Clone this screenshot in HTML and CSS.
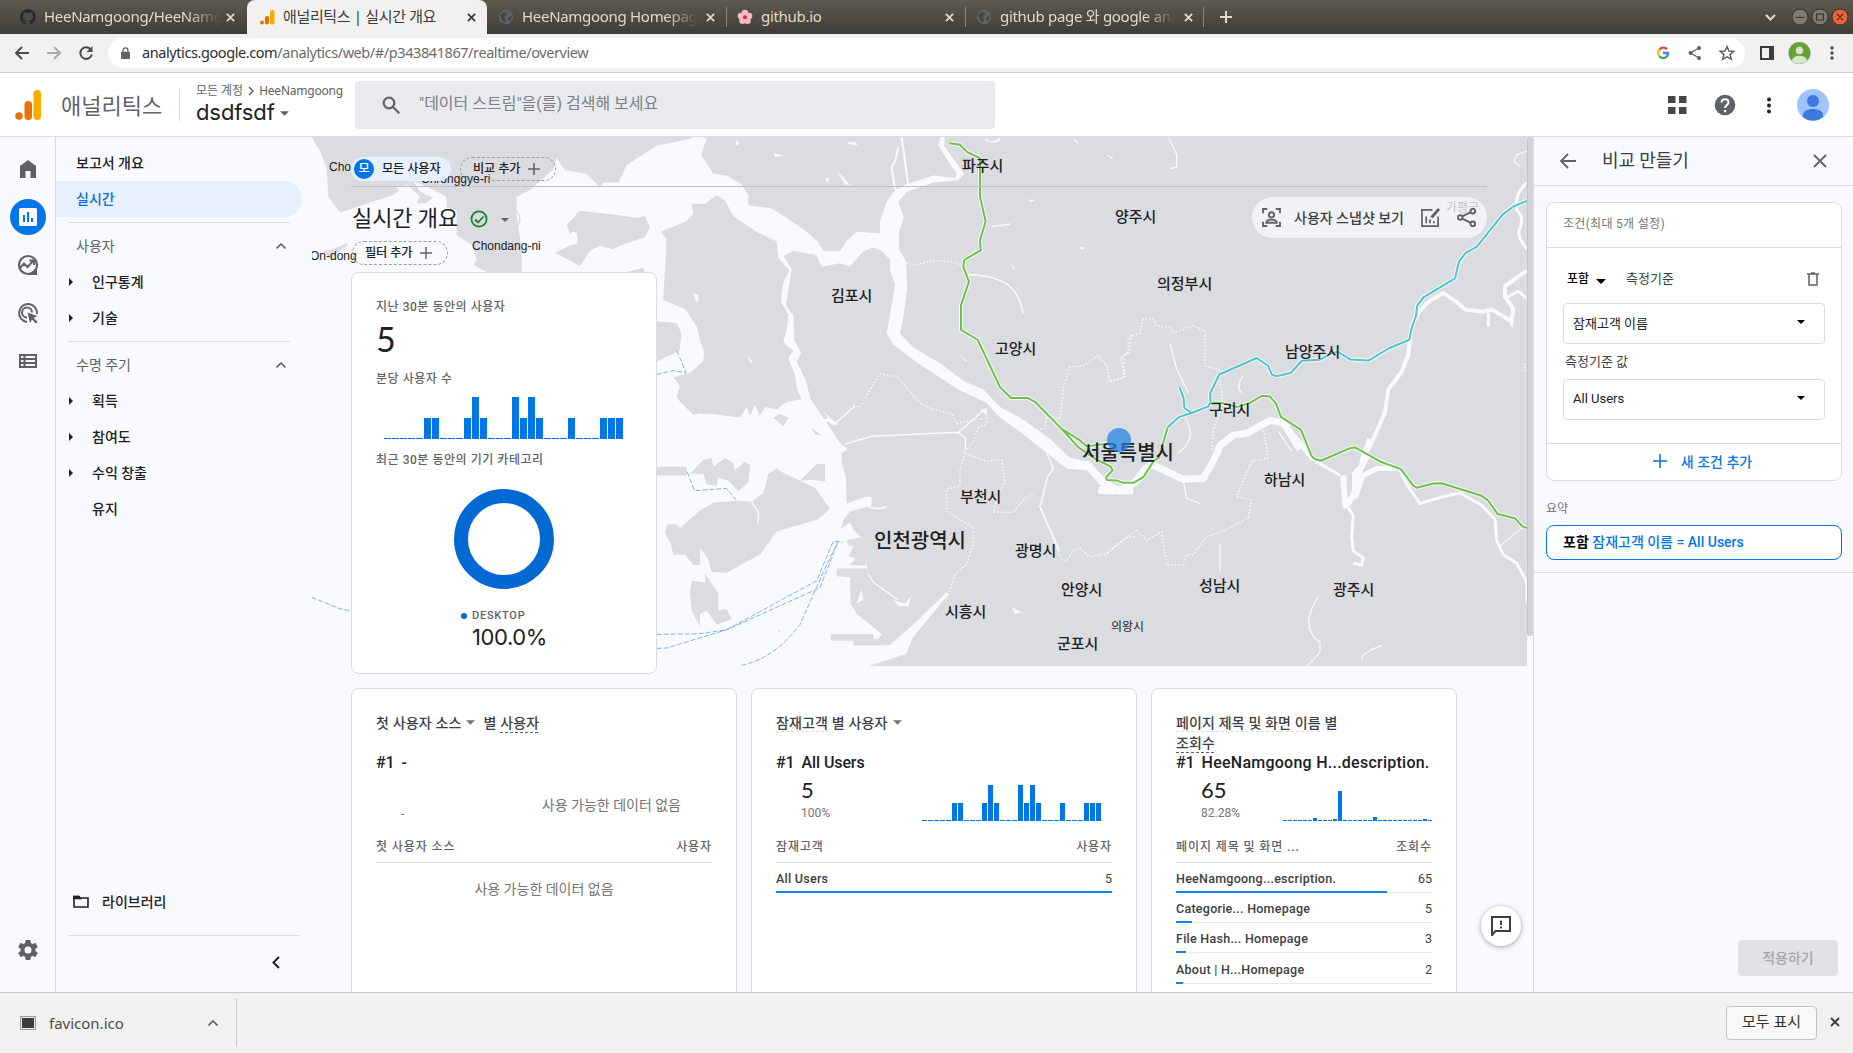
FILE: index.html
```html
<!DOCTYPE html>
<html lang="ko">
<head>
<meta charset="utf-8">
<title>애널리틱스 | 실시간 개요</title>
<link rel="stylesheet" href="styles.css">
</head>
<body>
<div class="window">
  <div class="tabs">
    <div class="tab tab-first"><svg class="fav" viewBox="0 0 16 16"><path fill="#24292f" d="M8 0a8 8 0 0 0-2.5 15.600c.4.1.5-.2.5-.4v-1.500c-2.200.5-2.700-1-2.700-1-.4-.9-.9-1.200-.9-1.200-.7-.5.1-.5.1-.5.8.1 1.200.8 1.200.8.7 1.200 1.900.9 2.300.7.1-.5.3-.9.5-1.100-1.800-.2-3.600-.9-3.600-4 0-.9.3-1.600.8-2.100-.1-.2-.4-1 .1-2.100 0 0 .7-.2 2.200.8a7.600 7.600 0 0 1 4 0c1.500-1 2.200-.8 2.200-.8.4 1.100.2 1.900.1 2.100.5.6.8 1.300.8 2.100 0 3.100-1.900 3.700-3.700 3.900.3.3.6.8.6 1.500v2.200c0 .2.1.5.6.4A8 8 0 0 0 8 0z"/></svg><span class="tab-title fade">HeeNamgoong/HeeNamgoong</span><svg class="x" viewBox="0 0 10 10"><path d="M1 1l8 8M9 1l-8 8"/></svg></div>
    <div class="tab active"><svg class="fav" viewBox="0 0 16 16"><circle cx="3" cy="13.500" r="2" fill="#e8710a"/><rect x="6" y="7" width="4" height="8.500" rx="1.800" fill="#e8710a"/><rect x="11" y="1" width="4.500" height="14.500" rx="2" fill="#f9ab00"/></svg><span class="tab-title">애널리틱스 | 실시간 개요</span><svg class="x" viewBox="0 0 10 10"><path d="M1 1l8 8M9 1l-8 8"/></svg></div>
    <div class="tab"><svg class="fav" viewBox="0 0 16 16"><circle cx="8" cy="8" r="7.200" fill="#5f6368"/><path fill="#46443e" d="M2 6l4-3 3 1-1 3-2 1 2 2-1 4-3-3zM10 8l4-1-1 4-3 1z"/></svg><span class="tab-title fade">HeeNamgoong Homepage</span><svg class="x" viewBox="0 0 10 10"><path d="M1 1l8 8M9 1l-8 8"/></svg></div>
    <div class="tab sep"><svg class="fav" viewBox="0 0 16 16"><g fill="#f8b8c4"><circle cx="8" cy="4" r="3.300"/><circle cx="12" cy="7" r="3.300"/><circle cx="10.500" cy="11.700" r="3.300"/><circle cx="5.500" cy="11.700" r="3.300"/><circle cx="4" cy="7" r="3.300"/></g><circle cx="8" cy="8.300" r="2" fill="#c8334a"/></svg><span class="tab-title">github.io</span><svg class="x" viewBox="0 0 10 10"><path d="M1 1l8 8M9 1l-8 8"/></svg></div>
    <div class="tab sep last"><svg class="fav" viewBox="0 0 16 16"><circle cx="8" cy="8" r="7.200" fill="#5f6368"/><path fill="#46443e" d="M2 6l4-3 3 1-1 3-2 1 2 2-1 4-3-3zM10 8l4-1-1 4-3 1z"/></svg><span class="tab-title fade">github page 와 google analytics</span><svg class="x" viewBox="0 0 10 10"><path d="M1 1l8 8M9 1l-8 8"/></svg></div>
    <svg class="plus" viewBox="0 0 12 12"><path d="M6 0v12M0 6h12"/></svg>
    <svg class="win" viewBox="0 0 90 20"><path d="M1 8l4.500 4.500L10 8" fill="none" stroke="#dfdbd2" stroke-width="2"/><g stroke="#35332f"><circle cx="35" cy="10" r="8" fill="#7d7a73"/><circle cx="55" cy="10" r="8" fill="#7d7a73"/><circle cx="75" cy="10" r="8" fill="#ef6034"/></g><path d="M31 10.500h8M51.500 7h7v6h-7zM72 7l6 6M78 7l-6 6" fill="none" stroke="#35332f" stroke-width="1.200"/></svg>
  </div>

  <div class="toolbar">
    <svg class="tb-nav" viewBox="0 0 90 20"><path d="M15 10H2M8 4l-6 6 6 6" class="dk"/><path d="M33 10h13M40 4l6 6-6 6" class="lt"/><path d="M76.500 6.200a5.800 5.800 0 1 0 1.300 5.200" class="dk"/><path d="M78.500 3v6h-6z" fill="#4c4c4c"/></svg>
    <div class="omni">
      <svg class="lock" viewBox="0 0 10 14"><rect y="5" width="10" height="8" rx="1" fill="#5f6368"/><path d="M2.300 6V3.500a2.700 2.700 0 0 1 5.400 0V6" fill="none" stroke="#5f6368" stroke-width="1.400"/></svg>
      <span class="url"><b>analytics.google.com</b>/analytics/web/#/p343841867/realtime/overview</span>
      <svg class="omni-icons" viewBox="0 0 84 18"><g fill="none" stroke-width="2.300"><path d="M6.500 5.500A5 5 0 0 1 14 5.300" stroke="#ea4335"/><path d="M6.700 5.300a5 5 0 0 0 0 7.200" stroke="#fbbc05"/><path d="M6.500 12.300a5 5 0 0 0 7 .5" stroke="#34a853"/><path d="M10 9h5a5 5 0 0 1-1.700 4" stroke="#4285f4"/></g><g fill="#5f6368"><circle cx="46" cy="4" r="2"/><circle cx="37.500" cy="9" r="2"/><circle cx="46" cy="14" r="2"/></g><path d="M46 4l-8.500 5 8.500 5" fill="none" stroke="#5f6368" stroke-width="1.400"/><path d="M74 2.500l2 4.500 4.800.4-3.700 3.200 1.200 4.700-4.300-2.500-4.300 2.500 1.200-4.700-3.700-3.200 4.800-.4z" fill="none" stroke="#5f6368" stroke-width="1.500"/></svg>
    </div>
    <svg class="tb-right" viewBox="0 0 88 24"><path d="M1 6h12v12H1z" fill="none" stroke="#3c3c3c" stroke-width="2"/><path d="M9 6h4v12H9z" fill="#3c3c3c"/><circle cx="39.500" cy="12" r="11" fill="#689f38"/><circle cx="39.500" cy="9.500" r="3.700" fill="#d7e5c8"/><path d="M32 20c0-7 15-7 15 0a11 11 0 0 1-15 0z" fill="#d7e5c8"/><g fill="#4c4c4c"><circle cx="72" cy="7" r="1.700"/><circle cx="72" cy="12" r="1.700"/><circle cx="72" cy="17" r="1.700"/></g></svg>
  </div>

  <header class="ga">
    <svg class="logo" viewBox="0 0 26 30"><circle cx="4" cy="26" r="3.800" fill="#e8710a"/><rect x="9.500" y="11" width="7.500" height="19" rx="3.700" fill="#e8710a"/><rect x="18.500" width="7.500" height="30" rx="3.700" fill="#f9ab00"/></svg>
    <span class="brand">애널리틱스</span>
    <div class="account"><div class="crumb">모든 계정 <svg viewBox="0 0 6 10"><path d="M1 1l4 4-4 4"/></svg> <i>HeeNamgoong</i></div><div class="prop">dsdfsdf<svg viewBox="0 0 10 5"><path d="M0 0h10L5 5z"/></svg></div></div>
    <div class="search"><svg viewBox="0 0 18 18"><circle cx="7" cy="7" r="5.300"/><path d="M11 11l6.300 6.300"/></svg><span>"데이터 스트림"을(를) 검색해 보세요</span></div>
    <svg class="ga-right" viewBox="0 0 164 34"><path d="M0 8h7.500v7H0zM11 8h7.500v7H11zM0 19h7.500v7H0zM11 19h7.500v7H11z" fill="#444746"/><circle cx="57" cy="17" r="10.300" fill="#5f6368"/><path d="M53.500 14.500c0-4.500 7-4.500 7 0 0 2.500-3.400 2.700-3.400 5.500" fill="none" stroke="#fff" stroke-width="2"/><path d="M56 22h2.200v2.200H56z" fill="#fff"/><g fill="#202124"><circle cx="101" cy="11.500" r="2"/><circle cx="101" cy="17.500" r="2"/><circle cx="101" cy="23.500" r="2"/></g><circle cx="145" cy="17" r="16" fill="#a0c3ff"/><circle cx="145" cy="13" r="6" fill="#3b78e0"/><path d="M135 29v-2c0-8 20-8 20 0v2a16 16 0 0 1-20 0z" fill="#3b78e0"/></svg>
  </header>

  <div class="body">
    <nav class="rail">
      <svg viewBox="0 0 36 36"><path d="M10 27V15l8-6 8 6v12h-5.500v-7h-5v7z"/></svg>
      <svg viewBox="0 0 36 36"><circle cx="18" cy="18" r="18" fill="#0276e8"/><rect x="9" y="9" width="18" height="18" rx="1.500" fill="#fff"/><path fill="#0276e8" d="M13 16h2v7h-2zM17 13h2v10h-2zM21 19h2v4h-2z"/></svg>
      <svg viewBox="0 0 36 36"><path d="M27 18v10h-9" fill="#5f6368"/><circle cx="18" cy="18" r="9" fill="#f8fafd" stroke="#5f6368" stroke-width="2.200"/><path class="ln" d="M10 21l4-4.500 3.500 3.500 5.500-6M19.500 13.500H24V18"/></svg>
      <svg viewBox="0 0 36 36"><path class="ln" d="M17 27a9 9 0 1 1 10-8M17 22.500a5 5 0 1 1 5-5"/><path d="M17.500 17.500l10 3.500-3.800 2 4 4-1.700 1.500-4-4-2 3.500z"/></svg>
      <svg viewBox="0 0 36 36"><path class="ln" d="M10 12h16v12H10zM10 16h16M10 20h16M14.500 12v12"/></svg>
      <svg class="gear" viewBox="0 0 24 24"><path fill-rule="evenodd" d="M19.430 12.980c.04-.32.070-.64.070-.98s-.03-.66-.07-.98l2.110-1.650c.19-.15.24-.42.12-.64l-2-3.460c-.12-.22-.39-.3-.61-.22l-2.490 1c-.52-.4-1.080-.73-1.690-.98l-.38-2.650A.49.49 0 0 0 14 2h-4c-.25 0-.46.18-.49.42l-.38 2.650c-.61.25-1.170.59-1.690.98l-2.490-1c-.23-.09-.49 0-.61.22l-2 3.460c-.13.22-.07.49.12.64l2.110 1.650c-.04.32-.07.65-.07.98s.03.66.07.98l-2.110 1.650c-.19.15-.24.42-.12.64l2 3.460c.12.22.39.3.61.22l2.490-1c.52.4 1.080.73 1.690.98l.38 2.650c.03.24.24.42.49.42h4c.25 0 .46-.18.49-.42l.38-2.650c.61-.25 1.170-.59 1.690-.98l2.490 1c.23.09.49 0 .61-.22l2-3.460c.12-.22.07-.49-.12-.64zM12 15.500a3.500 3.500 0 1 1 0-7 3.500 3.500 0 0 1 0 7z"/></svg>
    </nav>
    <nav class="menu">
      <a class="item">보고서 개요</a>
      <a class="item on">실시간</a>
      <div class="group">사용자<svg viewBox="0 0 10 6"><path d="M.5 5.500L5 1l4.500 4.500"/></svg></div>
      <a class="sub tri">인구통계</a>
      <a class="sub tri">기술</a>
      <div class="group">수명 주기<svg viewBox="0 0 10 6"><path d="M.5 5.500L5 1l4.500 4.500"/></svg></div>
      <a class="sub tri">획득</a>
      <a class="sub tri">참여도</a>
      <a class="sub tri">수익 창출</a>
      <a class="sub">유지</a>
      <div class="library"><svg viewBox="0 0 16 13"><path d="M1 11.500V1.500h4.500L7 3h8v9H1z"/><path d="M1 1.500h5l1.500 2H1z" fill="#202124"/></svg>라이브러리</div>
      <div class="collapse"><svg viewBox="0 0 8 13"><path d="M7 1L1.500 6.500 7 12"/></svg></div>
    </nav>

    <main class="content">
      <svg class="map" viewBox="312 137 1215 528.500">
        <defs>
          <path id="line-green" d="M748 38L780 42 802 63 840 80 840 190 857 260 840 315 842 343 793 370 790 390 807 432 783 500 783 570 833 598 900 733 933 764 983 764 1005 775 1085 852 1140 885 1160 902 1230 893M1085 852L1135 905 1185 937 1232 960 1238 970 1218 990 1221 998 1250 999 1270 1006 1300 1006 1330 990 1345 968 1360 945 1380 932M1387 900L1403 848M1530 777L1565 778 1610 790 1650 778 1685 758 1710 760 1728 780 1743 818 1803 855 1835 930 1845 938 1863 943 1950 907 1965 905 2040 945 2103 967 2138 1012 2150 1020 2200 1008 2225 1007 2345 1043 2365 1057 2393 1095 2445 1107 2467 1130 2481 1135"/>
          <path id="line-teal" d="M202 848L237 818 275 807 325 788 332 775 330 752 358 697 470 650 505 673 515 697 530 702 573 692 605 658 660 655 700 635 715 633 750 654 807 657 865 623 928 598 935 565 948 530 952 500 970 477 1065 423 1077 375 1097 350 1130 333 1207 242 1240 218 1281 202M238 732L251 765 253 792 275 807"/>
        </defs>
        <rect x="312" y="137" width="1215" height="529" fill="#f8fafd"/>
        <rect x="690" y="137" width="837" height="529" fill="#dbdce0"/>
        <g transform="translate(700 130) scale(.33333 .35074)">
          <path class="water" d="M-30 17L5 17 20 25 3 70 40 125 80 130 125 155 145 185 145 215 210 222 260 250 320 290 355 320 370 345 420 345 440 315 470 290 540 295 540 260 560 205 585 172 620 155 700 130 765 137 770 125 715 45 722 17 735 17 732 45 792 125 775 143 700 150 620 176 595 205 612 250 597 290 597 340 618 375 622 450 608 545 600 580 640 620 720 665 790 715 850 740 900 790 960 820 1050 880 1110 935 1170 945 1220 1000 1260 1018 1300 1012 1300 1038 1255 1040 1200 1012 1160 970 1100 965 1040 920 960 860 900 820 860 778 770 737 650 662 580 612 560 580 575 500 585 440 570 400 570 370 545 345 520 335 490 345 450 390 420 380 365 390 350 360 340 355 280 345 250 360 275 395 270 430 258 500 280 530 283 600 303 635 290 660 320 720 330 765 405 870 420 892 443 910 425 920 425 950 438 990 440 1065 500 1045 515 1047 515 1070 450 1088 430 1112 425 1135 450 1120 462 1142 485 1162 440 1168 445 1185 462 1185 445 1215 467 1222 450 1240 500 1242 497 1215 505 1270 500 1250 410 1250 410 1272 450 1275 452 1350 470 1380 545 1437 535 1452 520 1450 520 1470 570 1468 640 1410 740 1318 745 1325 640 1445 620 1490 600 1527 605 1540 -60 1540z"/>
          <path class="land" d="M510 1527L625 1492 1300 1480 1300 1540 510 1540zM393 1437h127v33h-60v-14h-67z"/>
          <path class="land" d="M-1165 20L-1140 60-1120 110-1115 190-1080 235-990 207-920 185-880 155-840 190-850 210-820 208-800 190-760 195-760 220-730 230-730 300-680 330-670 370-680 385-640 405-535 405-535 340-550 240-550 190-505 168-440 112-430 80-405 115-340 125-300 165-290 150-245 150-220 100-130 45-30 25-15 15z"/>
          <path class="water" d="M-915 160l20 0 45 48-15 0zM-860 145l60 25 40 20-15 15-65-30z"/>
          <path class="land" d="M-435 350L-380 325-400 270-360 230-265 240-190 250-165 245-150 275-165 305-240 330-260 340-300 330-330 345-360 388zM-220 405l50-12 5 15zM-1130 345l30-5 40-18 2 8-30 20-20 20z"/>
          <path class="water" d="M-395 310l10-20 15 3 3 30-20 5z"/>
          <path class="land" d="M15 210L50 185 75 200 100 245 170 290 230 318 235 365 268 400 248 440 243 490 265 525 262 560 250 605 280 630 265 650 285 700 290 735 305 768 260 775 230 797 195 790 180 815 165 785 150 815 140 790 120 820 50 812 0 808-20 812-60 775-70 760-60 730-80 705-30 692 10 660 12 630 0 600-10 560-45 510-110 485-100 310-118 290-45 262-20 240-25 210z"/>
          <path class="water" d="M-20 465l15 5 0 20-10-5zM110 25l8 15-12 5zM220 65l30 8-25 5zM140 640l18 20-5 8z"/>
          <path class="land" d="M-130 545L-70 550-55 580-62 630-130 660zM-130 960l90 0 0 25-90 0zM0 1085L40 1063 110 1057 155 1060 190 1035 205 980 230 965 245 975 300 1000 345 1020 390 1080 355 1110 230 1145 180 1210 80 1262 35 1260 25 1225 0 1190 0 1240-20 1240-45 1210-80 1210-88 1180-105 1150-98 1125-70 1125-60 1135zM300 1000l50-48 25 0 0 50-40-5zM10 940l25-5 5 25 35-25 25 15 5 20 30-25 15 10-5 50-30 25-30-30-30-10-5 25-30-5-10-30-40 0zM220 820l20-10 25 10-15 25zM335 850l30 20-20-2zM-25 1285L15 1290 15 1265 40 1300 55 1320 55 1370 80 1365 95 1395 50 1410 20 1370 0 1380 0 1415-25 1370-30 1320zM235 1425l8 0-6 8z"/>
          <g class="water"><path d="M410 115l40 42-15-2zM375 135l12 5-5 12zM442 35l25 0 5 10-25-5zM855 20q20 25 45 0l0 10q-20 15-45-2zM1120 20l15 18-8-2zM1215 70l25 8-5 5zM982 198l25 2-15 5zM1140 333l18 3-15 6zM1090 248l15 8zM935 378l10 18-5 2zM780 640l22 20-10-3zM485 1310l5 30-20 10zM580 1340l35 10 20-22-10 30-30 0zM935 1360l30 15-20 5zM760 1370l15 22-10-2zM840 798l20-5 0 20zM365 800l50 40-15 3-15-12-15 10 0-15 15-5z"/></g>
        </g>
        <g class="thin" transform="translate(700 130) scale(.33333 .35074)">
          <path stroke-width="2" d="M605 20L625 160M595 50L585 90 575 105 582 150 587 170"/>
          <path stroke-width="1.500" d="M435 895L515 873 775 862 855 797M775 862L797 880 795 910M875 275L930 268M500 1070q25 15 60 5M505 1265l15 25 75 50M1040 920l20 45-18 25-20 80M1018 1070l60 130M155 1060l20 30 0 35M805 412q100 5 130 40 18 12 35 70M405 837l60-50"/>
          <path class="dots" d="M618 380l30 5 50-12 60 2 25 12M460 785l20 5 30-50 30-45 50 8 75 80 40 15 50 10 15 30 40-10 40-5M860 800l0 35-25 15-15 40-30 30 70 25 45-5 10 60-20 40-15 50 60 0 30-35 30-20M795 920l-15 50 0 45-40 8 0 65 80 45 0 45-20 60-35 30-25 70M1000 858l35-8 5-35 40 10 10-90 20-60 40-2 45-30 25 30 10 45 45-15-5-60 20-10 5-50M1085 1225l15 5 20-30 20-8 30 25 50-10 60-45 30-5M1018 1070l65 150"/>
        </g>
        <g class="thin" transform="translate(1100 130) scale(.33333 .35074)">
          <path stroke-width="7" d="M-5 1025Q60 1040 110 1000 140 950 165 958L250 996 310 993Q345 940 360 900L400 870 440 865 510 828 550 835 600 910"/>
          <path stroke-width="5" d="M590 880L640 940"/><path stroke-width="3" d="M560 840L640 940 720 985"/>
          <path stroke-width="6" d="M730 985l5 85 30-30 0-60 20-20 20-40"/><path stroke-width="5" d="M765 1050L790 985 830 965 890 965M745 1070L775 1000 790 930 810 880"/>
          <path stroke-width="4" d="M800 920L830 860 855 805 865 740 905 690 925 640 935 560 955 520 985 490 1030 465 1070 490 1095 512 1150 518 1175 512 1235 545 1240 510 1215 475 1215 445 1281 400"/>
          <path stroke-width="3" d="M895 960L920 1010 960 1065 1030 1045 1080 1035 1145 1070 1185 1110 1190 1170 1210 1210 1250 1235 1281 1290V1350M1165 520l0 40M1235 540l0 20M1281 150q-40 30-30 80 25 20 5 60 0 20 25 50M740 1070l20 30-5 60 5 40 30 20-5 20-25-5M1215 480l40-20 25 20"/>
          <path stroke-width="1.200" d="M205 20l25 50 0 35-20 5M255 820q40 60-20 100M250 1000l10 50 40 15M360 1180v80M430 700q-25 30-5 50M535 860l40 55M655 1330q-60 90 5 130l0 30-40 40M785 1510q0-20 60-40M1195 1190l70-55M210 610l20 70 35 70M1281 60l-30 10-10 20 20 15"/>
          <path class="dots" d="M20 718l50-10 0-30-10-25 25-20 0-40 35-15 10-40 30 0 10 20 40 5 10 15 60-20 35 15 0 100 40 10 15 100-30 70-5 55 45-10M490 855l15 80-50 10-45 100 45 10-10 50-65 35-60 20-40 50-20 0-10 30-50 0-15-95-45 25-30-30-70 50-25 25M1275 665v25"/>
        </g>
        <g class="rail-green" transform="translate(700 130) scale(.33333 .35074)"><use href="#line-green" class="halo"/><use href="#line-green"/></g>
        <g class="rail-teal" transform="translate(1100 130) scale(.33333 .35074)"><use href="#line-teal" class="halo"/><use href="#line-teal"/></g>
        <g class="ferry" transform="translate(700 130) scale(.33333 .35074)"><path d="M-1165 1332L-1080 1365-1040 1373M-130 697L-80 686-42 692-70 628M-38 975L-17 1028 80 1022 108 1055M-130 1438L0 1436 80 1425 350 1285 400 1172 428 1176M-130 1478L-100 1477 80 1425 360 1305 415 1172 370 1260 300 1410Q220 1510 120 1527"/></g>
        <g class="names">
          <text x="962" y="171">파주시</text><text x="1115" y="222">양주시</text><text x="831" y="301">김포시</text><text x="1157" y="289">의정부시</text><text x="995" y="354">고양시</text><text x="1285" y="357">남양주시</text><text x="1209" y="415">구리시</text><text x="960" y="502">부천시</text><text x="1264" y="485">하남시</text><text x="1015" y="556">광명시</text><text x="1061" y="595">안양시</text><text x="1199" y="591">성남시</text><text x="1333" y="595">광주시</text><text x="945" y="617">시흥시</text><text x="1057" y="649">군포시</text>
          <text x="1082" y="460" class="big">서울특별시</text><text x="874" y="548" class="big">인천광역시</text><text x="1111" y="631" class="small">의왕시</text><text x="1446" y="212" class="small">가평군</text>
          <text x="329" y="171" class="en">Cho</text><text x="421" y="183" class="en">Chronggye-ri</text><text x="472" y="250" class="en">Chondang-ni</text><text x="310" y="260" class="en">On-dong</text>
        </g>
        <circle cx="1119" cy="440" r="12" fill="#1a80e6" fill-opacity=".7"/>
      </svg>
      <div class="scrollbar"></div>

      <div class="page">
        <div class="compare"><span class="all"><b>모</b>모든 사용자</span><span class="chip">비교 추가<svg viewBox="0 0 12 12"><path d="M6 0v12M0 6h12"/></svg></span></div>
        <div class="heading"><h1>실시간 개요</h1><svg class="check" viewBox="0 0 54 18"><circle cx="9" cy="9" r="7.600" fill="none" stroke="#188038" stroke-width="1.800"/><path d="M5 9.500l3 3 5.500-6" fill="none" stroke="#188038" stroke-width="1.800"/><path d="M31 8h8l-4 4z" fill="#5f6368"/><path d="M47 1q6 8 0 16" fill="none" stroke="#cfd1d5"/></svg>
          <div class="actions"><svg viewBox="0 0 18 18"><path d="M1 5V1h4M13 1h4v4M17 13v4h-4M5 17H1v-4"/><circle cx="9" cy="6.500" r="2.500"/><path d="M4 14c0-4 10-4 10 0z"/></svg><span>사용자 스냅샷 보기</span><svg viewBox="0 0 20 20"><path d="M12 2H1v17h17V9M5.500 16V9M9.500 16v-4M13.500 16v-2"/><path d="M11 10l8-9" stroke-width="3"/></svg><svg viewBox="0 0 18 18"><circle cx="15" cy="3" r="2.200"/><circle cx="3" cy="9" r="2.200"/><circle cx="15" cy="15" r="2.200"/><path d="M5 8l8-4M5 10l8 4"/></svg></div>
        </div>
        <span class="chip filter">필터 추가<svg viewBox="0 0 12 12"><path d="M6 0v12M0 6h12"/></svg></span>

        <section class="card overview">
          <p class="lab">지난 30분 동안의 사용자</p>
          <p class="huge">5</p>
          <p class="lab l2">분당 사용자 수</p>
          <svg class="bars" viewBox="0 0 240 42"><path class="base" stroke-dasharray="7 1" d="M0 41.500h239"/><path d="M40 21h7v21h-7zM48 21h7v21h-7zM80 21h7v21h-7zM88 0h7v42h-7zM96 21h7v21h-7zM128 0h7v42h-7zM136 21h7v21h-7zM144 0h7v42h-7zM152 21h7v21h-7zM184 21h7v21h-7zM216 21h7v21h-7zM224 21h7v21h-7zM232 21h7v21h-7z"/></svg>
          <p class="lab l3">최근 30분 동안의 기기 카테고리</p>
          <div class="donut"></div>
          <div class="legend"><i></i><span>DESKTOP</span></div>
          <p class="pct">100.0%</p>
        </section>

        <div class="cards">
          <section class="card small">
            <h2>첫 사용자 소스<svg viewBox="0 0 10 5"><path d="M0 0h10L5 5z"/></svg>별 <u>사용자</u></h2>
            <div class="rank"><b>#1</b><b>-</b></div>
            <div class="metric"><div><small class="dash">-</small></div><span class="none">사용 가능한 데이터 없음</span></div>
            <div class="thead"><span>첫 사용자 소스</span><span>사용자</span></div>
            <p class="empty">사용 가능한 데이터 없음</p>
          </section>
          <section class="card small">
            <h2><u class="soft">잠재고객</u> 별 사용자<svg viewBox="0 0 10 5"><path d="M0 0h10L5 5z"/></svg></h2>
            <div class="rank"><b>#1</b><b>All Users</b></div>
            <div class="metric"><div><strong>5</strong><small>100%</small></div><svg class="mini" viewBox="0 0 180 36"><path class="base" stroke-dasharray="5 1" d="M0 35.500h179"/><path d="M30 18h5v18h-5zM36 18h5v18h-5zM60 18h5v18h-5zM66 0h5v36h-5zM72 18h5v18h-5zM96 0h5v36h-5zM102 18h5v18h-5zM108 0h5v36h-5zM114 18h5v18h-5zM138 18h5v18h-5zM162 18h5v18h-5zM168 18h5v18h-5zM174 18h5v18h-5z"/></svg></div>
            <div class="thead"><span>잠재고객</span><span>사용자</span></div>
            <div class="row"><b>All Users</b><span>5</span><i style="width:100%"></i></div>
          </section>
          <section class="card small narrow">
            <h2><u class="soft">페이지 제목 및 화면 이름</u> 별<br><u>조회수</u></h2>
            <div class="rank"><b>#1</b><b class="long">HeeNamgoong H...description.</b></div>
            <div class="metric"><div><strong>65</strong><small>82.28%</small></div><svg class="mini m3" viewBox="0 0 149 36"><path class="base" stroke-dasharray="4 1" d="M0 35.500h149"/><path d="M30 33h4v3h-4zM50 34h4v2h-4zM55 6h4v30h-4zM90 32h4v4h-4zM140 34h4v2h-4z"/></svg></div>
            <div class="thead"><span>페이지 제목 및 화면 ...</span><span>조회수</span></div>
            <div class="row"><b>HeeNamgoong...escription.</b><span>65</span><i style="width:82.3%"></i></div>
            <div class="row"><b>Categorie... Homepage</b><span>5</span><i style="width:6.3%"></i></div>
            <div class="row"><b>File Hash... Homepage</b><span>3</span><i style="width:3.8%"></i></div>
            <div class="row r4"><b>About | H...Homepage</b><span>2</span><i style="width:2.6%"></i></div>
          </section>
        </div>
      </div>
      <div class="fab"><svg viewBox="0 0 20 20"><path d="M1 19V1h18v14H4.500z"/><path d="M10 4.500V9M10 10.500v2"/></svg></div>
    </main>

    <aside class="panel">
      <div class="phead"><svg viewBox="0 0 16 16"><path d="M16 8H1M8 1L1 8l7 7"/></svg><span>비교 만들기</span><svg viewBox="0 0 14 14"><path d="M1 1l12 12M13 1L1 13"/></svg></div>
      <div class="builder">
        <div class="cond-title">조건(최대 5개 설정)</div>
        <div class="cond">
          <div class="inc"><b>포함</b><svg viewBox="0 0 10 5"><path d="M0 0h10L5 5z"/></svg><span>측정기준</span><svg class="trash" viewBox="0 0 12 14"><path d="M2 2v11h8V2M0 2h12M4 1h4"/></svg></div>
          <div class="select">잠재고객 이름<svg viewBox="0 0 8 4"><path d="M0 0h8L4 4z"/></svg></div>
          <div class="vlabel">측정기준 값</div>
          <div class="select">All Users<svg viewBox="0 0 8 4"><path d="M0 0h8L4 4z"/></svg></div>
        </div>
        <div class="add"><svg viewBox="0 0 14 14"><path d="M7 0v14M0 7h14"/></svg>새 조건 추가</div>
      </div>
      <div class="sum-label">요약</div>
      <div class="summary"><b>포함</b> 잠재고객 이름 = All Users</div>
      <div class="pfoot"><span>적용하기</span></div>
    </aside>
  </div>

  <footer class="downloads">
    <div class="file"><svg viewBox="0 0 16 14"><rect x=".5" y=".5" width="15" height="13" fill="#eee" stroke="#999"/><rect x="2" y="2" width="12" height="10" fill="#3d3d3d"/></svg><span>favicon.ico</span><svg class="up" viewBox="0 0 10 6"><path d="M.5 5.500L5 1l4.500 4.500"/></svg></div>
    <span class="showall">모두 표시</span>
    <svg class="dx" viewBox="0 0 10 10"><path d="M1 1l8 8M9 1l-8 8"/></svg>
  </footer>
</div>
</body>
</html>
```

FILE: styles.css
```css
* { box-sizing: border-box; }
body { margin: 0; font-family: Roboto, "Noto Sans CJK KR", sans-serif; font-size: 14px; color: #202124; }
p, h1, h2 { margin: 0; font-weight: 400; }
svg { display: block; flex: none; }
i { font-style: normal; }
.window { width: 1853px; height: 1053px; display: flex; flex-direction: column; overflow: hidden; background: #fff; white-space: nowrap; }

/* browser chrome */
.tabs { height: 34px; display: flex; align-items: center; background: linear-gradient(#5d594e, #3e3d38); font: 15px/20px "Noto Sans", "Noto Sans CJK KR", sans-serif; color: #dfdbd2; }
.tab { width: 239px; height: 34px; display: flex; align-items: center; padding: 0 9px 0 11px; }
.tab-first { width: 247px; padding-left: 20px; padding-right: 10px; }
.tab.active { width: 240px; background: #f2f1f0; color: #3c3c3c; border-radius: 8px 8px 0 0; padding-left: 12px; }
.sep { background: linear-gradient(#8a867b, #8a867b) no-repeat 0 50% / 1px 20px; }
.last { background: linear-gradient(#8a867b, #8a867b) no-repeat 0 50% / 1px 20px, linear-gradient(#8a867b, #8a867b) no-repeat 100% 50% / 1px 20px; }
.fav { width: 16px; height: 16px; margin-right: 8px; }
.tab-title { width: 176px; overflow: hidden; letter-spacing: -.3px; padding-bottom: 2px; }
.active .tab-title { letter-spacing: -.35px; }
.fade { -webkit-mask-image: linear-gradient(90deg, #000 82%, transparent); mask-image: linear-gradient(90deg, #000 82%, transparent); }
.x { width: 9px; height: 9px; margin-left: auto; margin-right: 2px; fill: none; stroke: currentColor; stroke-width: 2; }
.plus { width: 12px; height: 12px; margin-left: 16px; stroke: #dfdbd2; stroke-width: 2; }
.win { width: 90px; height: 20px; margin-left: auto; margin-right: -2px; }
.toolbar { height: 39px; display: flex; align-items: center; background: #f2f1f0; border-bottom: 1px solid #ccc; }
.tb-nav { width: 90px; height: 20px; margin-left: 14px; fill: none; stroke-width: 2; }
.dk { stroke: #4c4c4c; }
.lt { stroke: #aaa; }
.omni { width: 1637px; height: 30px; margin-left: 4px; border-radius: 15px; background: #fff; display: flex; align-items: center; padding-left: 13px; font: 14.500px/20px "Noto Sans", sans-serif; letter-spacing: -.42px; color: #6b6b6b; }
.lock { width: 9px; height: 13px; margin-right: 12px; }
.url { padding-bottom: 2px; }
.url b { font-weight: 400; color: #2e2e2e; }
.omni-icons { width: 84px; height: 18px; margin-left: auto; margin-right: 8px; }
.tb-right { width: 88px; height: 24px; margin-left: 15px; }

/* product header */
.ga { height: 64px; display: flex; align-items: center; border-bottom: 1px solid #dadce0; background: #fff; }
.logo { width: 26px; height: 30px; margin-left: 15px; }
.brand { margin-left: 20px; width: 100px; font-size: 22px; line-height: 32px; color: #5f6368; padding-top: 4px; }
.account { margin-left: 18px; width: 176px; height: 48px; padding-left: 17px; background: linear-gradient(#dadce0, #dadce0) no-repeat 0 8px / 1px 32px; }
.crumb { font-size: 12px; line-height: 20px; color: #5f6368; display: flex; align-items: center; gap: 5px; }
.crumb i { font: 12px/20px "Noto Sans", sans-serif; letter-spacing: -.22px; }
.crumb svg { width: 6px; height: 10px; fill: none; stroke: #5f6368; stroke-width: 1.500; }
.prop { display: flex; align-items: center; font: 22px/23px Inter, sans-serif; letter-spacing: -.1px; }
.prop svg { width: 9px; height: 5px; margin: 3px 0 0 5px; fill: #5f6368; }
.search { width: 640px; height: 48px; border-radius: 4px; background: #e8eaed; display: flex; align-items: center; color: #80868b; font-size: 16px; margin-top: 1px; }
.search svg { width: 18px; height: 18px; margin: 0 19px 0 27px; fill: none; stroke: #5f6368; stroke-width: 2.200; }
.search span { line-height: 20px; padding-bottom: 2px; }
.search span { letter-spacing: 0; color: #7b8186; }
.ga-right { width: 164px; height: 34px; margin-left: auto; margin-right: 21px; }

/* navigation */
.body { height: 855px; display: flex; background: #f8fafd; }
.rail { width: 56px; border-right: 1px solid #dadce0; display: flex; flex-direction: column; align-items: center; gap: 12px; padding-top: 14px; }
.rail svg { width: 36px; height: 36px; fill: #5f6368; }
.rail .ln { fill: none; stroke: #5f6368; stroke-width: 2; }
.rail .gear { width: 24px; height: 24px; margin-top: auto; margin-bottom: 30px; }
.menu { width: 256px; padding-top: 8px; display: flex; flex-direction: column; font-weight: 500; }
.item { height: 36px; line-height: 36px; padding-left: 20px; width: 246px; }
.on { background: #e6f0fe; color: #0b6ddb; border-radius: 0 18px 18px 0; }
.group { margin: 5px 22px 0 12px; padding: 3px 4px 0 8px; height: 42px; border-top: 1px solid #dadce0; display: flex; align-items: center; justify-content: space-between; color: #5f6368; font-weight: 400; }
.group svg, .up { width: 10px; height: 6px; fill: none; stroke: #5f6368; stroke-width: 1.600; }
.group svg { margin-top: 1px; }
.sub { height: 36px; line-height: 36px; padding-left: 36px; }
.tri::before { content: ""; float: left; margin: 14px 0 0 -23px; border: 4px solid transparent; border-left-color: #202124; border-right: 0; }
.library { margin: auto 13px 0 13px; height: 67px; padding: 0 0 2px 4px; display: flex; align-items: center; gap: 13px; border-bottom: 1px solid #dadce0; }
.library svg { width: 16px; height: 13px; fill: none; stroke: #202124; stroke-width: 1.600; }
.collapse { height: 56px; padding: 20px 0 0 216px; }
.collapse svg { width: 8px; height: 13px; fill: none; stroke: #202124; stroke-width: 2; }

/* realtime map */
.content { width: 1221px; position: relative; overflow: hidden; }
.map { position: absolute; left: 0; top: 0; width: 1215px; height: 528.500px; }
.map path { vector-effect: non-scaling-stroke; }
.water { fill: #f8fafd; }
.land { fill: #dbdce0; }
.thin { fill: none; stroke: #f8fafd; stroke-linejoin: round; }
.dots { stroke-width: 1.500; stroke-dasharray: 1.500 2; }
.rail-green, .rail-teal { fill: none; stroke-width: 2; stroke: #6fc04b; stroke-linejoin: round; }
.rail-teal { stroke: #4fc3d0; }
.halo { stroke: #f8fafd; stroke-width: 4; }
.ferry { fill: none; stroke: #82b1f5; stroke-width: 1; stroke-dasharray: 5 2; }
.names { font: 500 15px "Noto Sans CJK KR", sans-serif; fill: #202124; }
.names .big { font-size: 20px; }
.names .small { font-size: 12px; font-weight: 400; }
.names .en { font: 12px "Liberation Sans", sans-serif; }
.scrollbar { position: absolute; right: 0; top: 0; width: 6px; height: 499px; background: #d3d4d8; border-left: 1px solid #c3c4c8; border-radius: 3px; }
.page { position: relative; padding: 0 0 0 39px; }
.compare { height: 50px; width: 1136px; padding-top: 20px; border-bottom: 1px solid #bfc0c4; display: flex; gap: 9px; }
.all, .chip { height: 24px; border-radius: 12px; display: flex; align-items: center; gap: 8px; font-size: 12.200px; font-weight: 500; line-height: 20px; letter-spacing: -.1px; }
.all { width: 100px; background: #e6f0fe; padding-left: 3px; }
.all b { width: 20px; height: 20px; border-radius: 10px; background: #0276e8; color: #fff; text-align: center; font-weight: 500; flex: none; }
.chip { width: 96px; border: 1px dashed #9aa0a6; padding-left: 12px; }
.chip svg { width: 12px; height: 12px; stroke: #5f6368; stroke-width: 1.500; }
.heading { height: 54px; display: flex; align-items: center; width: 1136px; padding-top: 8px; }
h1 { font-size: 22px; line-height: 30px; margin: 1px 0 0 1px; width: 118px; letter-spacing: -.1px; }
.check { width: 54px; height: 18px; margin-top: 1px; }
.actions { margin-left: auto; width: 235px; height: 41px; margin-top: -1px; border-radius: 21px; background: rgba(248,250,253,.75); display: flex; align-items: center; padding-left: 10px; color: #3c4043; font-weight: 500; }
.actions svg { width: 19px; height: 19px; fill: none; stroke: #5f6368; stroke-width: 1.800; }
.actions span { margin: 0 16px 0 13px; width: 111px; line-height: 20px; }
.actions svg + svg { margin-left: 17px; }
.filter { margin-left: 1px; }
.card { background: #fff; border: 1px solid #dadce0; border-radius: 8px; }
.overview { width: 306px; height: 402px; margin-top: 7px; padding: 24px 24px 0; }
.lab { font-size: 12px; line-height: 20px; letter-spacing: .53px; color: #5f6368; font-weight: 500; }
.huge { font: 34px/40px Lato, sans-serif; padding-top: 2px; height: 45px; }
.l2 { margin-top: 7px; }
.bars { width: 240px; height: 42px; margin: 8px 0 0 8px; fill: #0276e8; }
.base { stroke: #0276e8; stroke-width: 1; fill: none; }
.l3 { margin-top: 11px; }
.donut { width: 100px; height: 100px; border: 14px solid #0269d3; border-radius: 50%; margin: 19px 0 0 78px; }
.legend { display: flex; align-items: center; margin: 18px 0 0 85px; gap: 5px; font: 500 11px/18px Roboto, sans-serif; letter-spacing: .75px; color: #5f6368; }
.legend i { width: 6px; height: 6px; border-radius: 3px; background: #0269d3; }
.pct { font: 22px/25px Inter, sans-serif; margin-left: 96px; letter-spacing: -.4px; }

/* report cards */
.cards { display: flex; gap: 14px; padding-top: 14px; }
.small { width: 386px; height: 330px; padding: 24px 24px 0; }
.narrow { width: 306px; }
h2 { height: 41px; font-size: 14px; line-height: 20px; color: #3c4043; font-weight: 500; letter-spacing: .15px; }
h2 u { text-decoration: none; background: repeating-linear-gradient(90deg, #5f6368 0 3px, transparent 3px 5px) no-repeat 0 100% / 100% 1px; padding-bottom: 2px; }
h2 .soft { background-image: repeating-linear-gradient(90deg, #dadce0 0 3px, transparent 3px 5px); padding-bottom: 1px; }
h2 svg { display: inline-block; width: 9px; height: 5px; margin: 0 8px 3px 5px; fill: #757575; }
.rank { display: flex; gap: 7px; font-size: 16px; line-height: 16px; padding-top: 1px; letter-spacing: -.1px; }
.rank b { font-weight: 500; }
.rank .long { letter-spacing: .25px; }
.metric { display: flex; justify-content: space-between; height: 60px; }
.metric > div { padding-left: 25px; }
.metric strong { display: block; font: 22px/28px Lato, sans-serif; padding-top: 5px; height: 34px; }
.metric small { display: block; font-size: 12px; line-height: 16px; color: #757575; }
.metric .dash { padding-top: 35px; }
.none { color: #757575; margin-right: 31px; padding-top: 18px; line-height: 32px; }
.mini { width: 180px; height: 36px; margin: 14px 10px 0 0; fill: #0276e8; }
.m3 { width: 149px; margin-right: 0; }
.thead { height: 30px; margin-top: 2px; display: flex; justify-content: space-between; font-size: 12px; line-height: 28px; letter-spacing: .9px; color: #5f6368; font-weight: 500; border-bottom: 1px solid #dadce0; }
.row { position: relative; height: 30px; display: flex; justify-content: space-between; font-size: 12.500px; line-height: 31px; color: #3c4043; border-bottom: 1px solid #e8eaed; }
.row b { font-weight: 500; letter-spacing: .26px; }
.row i { position: absolute; left: 0; bottom: -1px; height: 2px; background: #1a80e6; }
.r4 { height: 31px; line-height: 33px; }
.empty { text-align: center; color: #757575; line-height: 52px; }
.fab { position: absolute; left: 1169px; top: 769px; width: 40px; height: 40px; border-radius: 20px; background: #fff; box-shadow: 0 1px 5px rgba(0,0,0,.35); padding: 10px; }
.fab svg { width: 20px; height: 20px; fill: none; stroke: #3c4043; stroke-width: 2; }

/* comparison panel */
.panel { width: 320px; border-left: 1px solid #dadce0; display: flex; flex-direction: column; }
.phead { height: 49px; border-bottom: 1px solid #dadce0; display: flex; align-items: center; font-size: 18px; padding: 0 26px; color: #3c4043; }
.phead svg { width: 16px; height: 16px; fill: none; stroke: #5f6368; stroke-width: 1.800; }
.phead span { margin: 0 auto 0 26px; line-height: 24px; padding-bottom: 1px; letter-spacing: -.1px; }
.phead svg + span + svg { width: 14px; height: 14px; }
.builder { margin: 16px 10px 0 12px; height: 279px; width: 296px; border: 1px solid #dadce0; border-radius: 8px; background: #fff; display: flex; flex-direction: column; }
.cond-title { height: 45px; line-height: 43px; padding-left: 16px; font-size: 12px; letter-spacing: .3px; color: #757575; border-bottom: 1px solid #dadce0; }
.cond { height: 196px; padding: 14px 16px 0; border-bottom: 1px solid #dadce0; }
.inc { height: 41px; padding: 0 6px 7px 4px; display: flex; align-items: center; font-size: 13px; color: #3c4043; line-height: 20px; }
.inc b { color: #000; font-weight: 500; font-size: 12px; }
.inc svg { width: 10px; height: 5px; margin: 4px 0 0 7px; fill: #000; }
.inc span { margin: 0 auto 0 20px; }
.inc .trash { width: 12px; height: 14px; margin: 0; fill: none; stroke: #5f6368; stroke-width: 1.500; }
.select { height: 41px; border: 1px solid #dadce0; border-radius: 4px; display: flex; align-items: center; justify-content: space-between; padding: 0 19px 3px 9px; font-size: 13px; }
.select svg { width: 8px; height: 4px; }
.vlabel { height: 35px; line-height: 36px; padding-left: 2px; font-size: 13px; color: #3c4043; }
.add { flex: 1; display: flex; align-items: center; justify-content: center; gap: 14px; color: #0276e8; font-weight: 500; padding: 0 0 2px 17px; }
.add svg { width: 14px; height: 14px; stroke: #0276e8; stroke-width: 1.600; }
.sum-label { margin: 18px 0 6px 12px; height: 20px; line-height: 20px; font-size: 12px; color: #757575; }
.summary { margin-left: 12px; width: 296px; height: 35px; line-height: 32px; border: 1px solid #0276e8; border-radius: 8px; padding-left: 16px; background: #fff; color: #0276e8; font-weight: 500; }
.summary b { color: #000; font-weight: 700; }
.pfoot { margin-top: 12px; flex: 1; border-top: 1px solid #dadce0; display: flex; justify-content: flex-end; align-items: flex-end; padding: 0 15px 16px; }
.pfoot span { width: 100px; height: 36px; line-height: 36px; text-align: center; background: #e1e2e5; color: #a4a7ab; border-radius: 4px; font-weight: 500; }

/* downloads */
.downloads { height: 61px; border-top: 1px solid #c9c8c7; background: #f2f1f0; display: flex; align-items: center; font: 15px/20px "Noto Sans", "Noto Sans CJK KR", sans-serif; color: #4c4c4c; }
.file { width: 237px; height: 48px; border-right: 1px solid #c9c8c7; display: flex; align-items: center; padding: 0 0 1px 20px; }
.file > svg:first-child { width: 16px; height: 14px; }
.file span { margin-left: 13px; }
.file .up { margin: 0 18px 0 auto; }
.showall { margin-left: auto; width: 91px; height: 34px; margin-bottom: 1px; border: 1px solid #c4c3c2; border-radius: 4px; background: #f8f8f7; text-align: center; line-height: 29px; color: #333; }
.dx { width: 10px; height: 10px; margin: 0 13px 2px; stroke: #3c3c3c; stroke-width: 1.800; }
```
